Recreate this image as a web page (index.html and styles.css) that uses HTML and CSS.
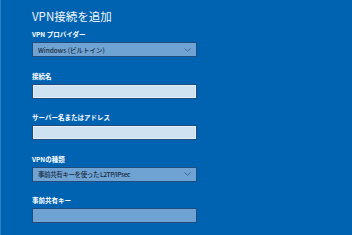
FILE: index.html
```html
<!DOCTYPE html>
<html lang="ja">
<head>
<meta charset="utf-8">
<link rel="stylesheet" href="styles.css">
</head>
<body>
<div class="page">
  <h1 class="title">VPN接続を追加</h1>
  <div class="field">
    <div class="label">VPN プロバイダー</div>
    <div class="box select"><span>Windows (ビルトイン)</span>
      <svg class="chev" width="7" height="4" viewBox="0 0 7 4"><path d="M0.5 0.5 L3.5 3.2 L6.5 0.5" fill="none" stroke="#46698f" stroke-width="1"/></svg>
    </div>
  </div>
  <div class="field">
    <div class="label">接続名</div>
    <div class="box input"></div>
  </div>
  <div class="field">
    <div class="label">サーバー名またはアドレス</div>
    <div class="box input"></div>
  </div>
  <div class="field">
    <div class="label">VPNの種類</div>
    <div class="box select"><span class="narrow">事前共有キーを使った L2TP/IPsec</span>
      <svg class="chev" width="7" height="4" viewBox="0 0 7 4"><path d="M0.5 0.5 L3.5 3.2 L6.5 0.5" fill="none" stroke="#46698f" stroke-width="1"/></svg>
    </div>
  </div>
  <div class="field">
    <div class="label">事前共有キー</div>
    <div class="box input dim"></div>
  </div>
</div>
</body>
</html>
```

FILE: styles.css
```css
html, body {
  margin: 0;
  padding: 0;
  width: 352px;
  height: 235px;
  overflow: hidden;
  background: #0063b1;
}
.page {
  box-sizing: border-box;
  width: 352px;
  height: 235px;
  padding: 9px 0 0 31px;
  border-left: 1px solid #2f7fc2;
  font-family: "Noto Sans CJK JP", "Noto Sans", sans-serif;
  color: #ffffff;
}
.title {
  margin: 0;
  font-size: 11.5px;
  line-height: 14px;
  font-weight: 400;
  color: #f2f6fb;
}
.field {
  display: flex;
  flex-direction: column;
  gap: 3px;
  width: 165px;
  margin-top: 14.5px;
}
.title + .field { margin-top: 7px; }
.label {
  font-size: 6.5px;
  line-height: 9px;
  height: 9px;
  font-weight: 700;
  color: #ffffff;
}
.box {
  box-sizing: border-box;
  height: 15px;
  border: 1px solid #1d4c7d;
  display: flex;
  align-items: center;
  padding: 0 5px 0 5px;
}
.select {
  background: #6ea3d4;
  justify-content: space-between;
  color: #1b2b40;
  font-size: 6.5px;
  font-weight: 500;
}
.narrow {
  letter-spacing: -0.4px;
}
.input {
  background: #cfe2f2;
  box-shadow: inset 0 0 0 1px #e3eef8;
}
.input.dim {
  background: #6ea3d4;
  box-shadow: none;
}
.chev { flex: none; }
```
